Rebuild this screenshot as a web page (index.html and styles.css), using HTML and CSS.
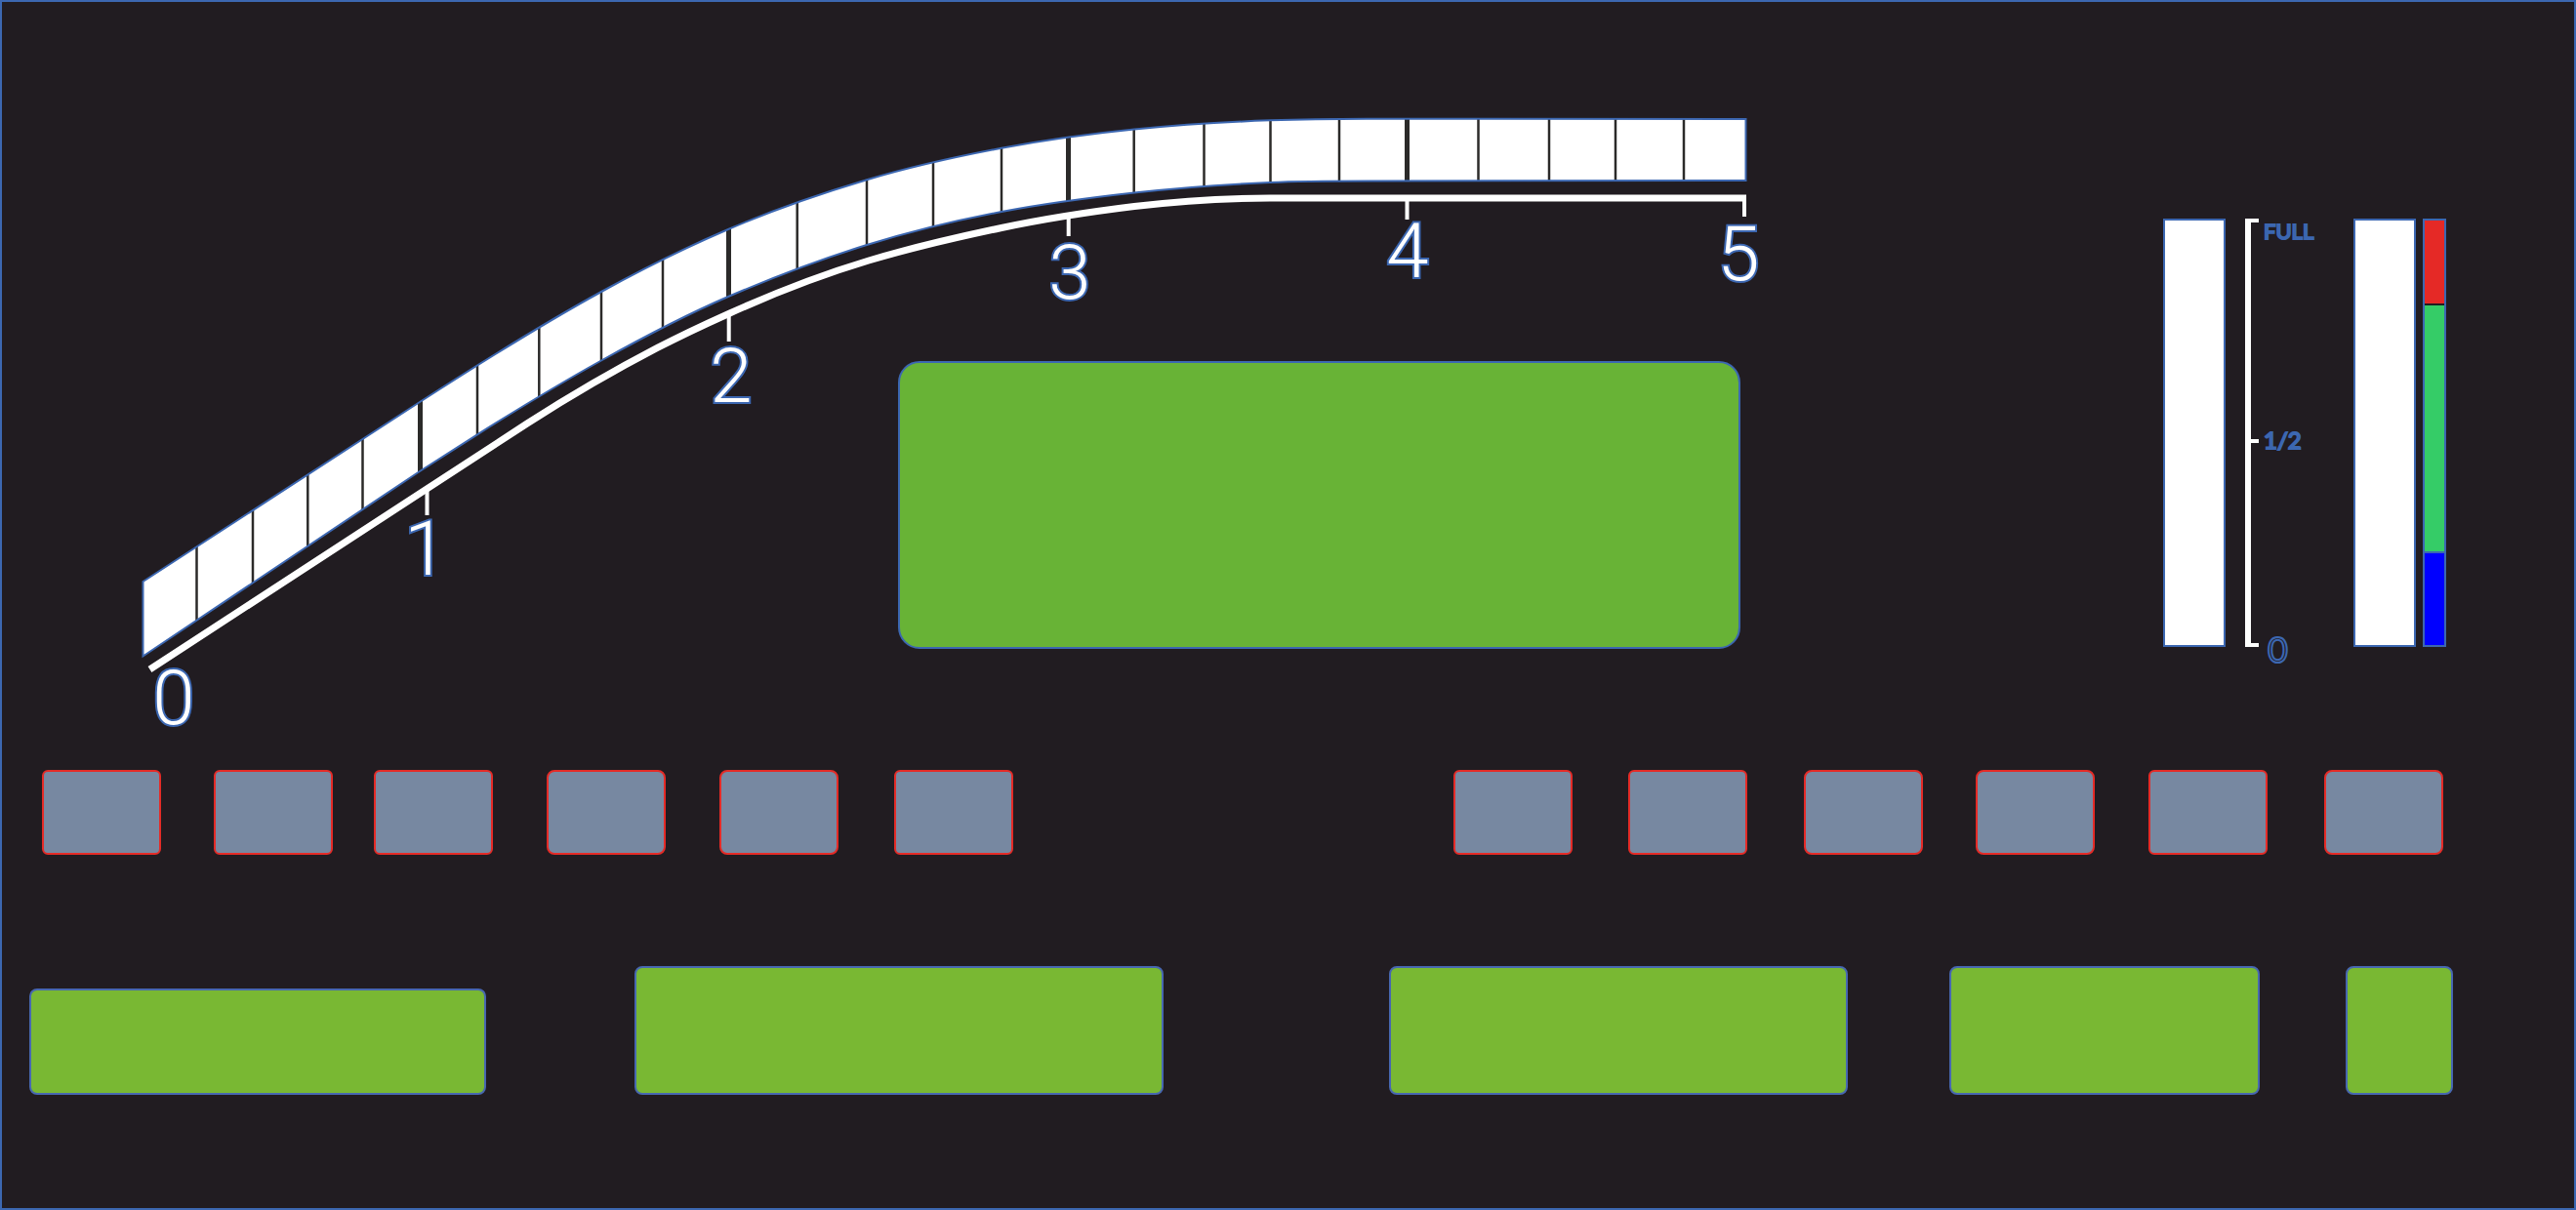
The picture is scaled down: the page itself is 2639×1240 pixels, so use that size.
FILE: index.html
```html
<!DOCTYPE html>
<html lang="en">
<head>
<meta charset="utf-8">
<title>Instrument cluster</title>
<link rel="stylesheet" href="styles.css">
</head>
<body>
<main class="panel">
  <section class="instruments">
    <div class="tacho">
      <svg class="dial" viewBox="2 2 1898 760" role="img" aria-label="Engine speed, 0 to 5">
        <defs>
          <path id="band" d="M146.500 596L430 412C492 372 554 333 616 299C659 275.300 703 253.500 746 235C793 214.800 841 198.400 888 184.300C934 170.500 980 160.500 1026 151.800C1071 143.300 1117 137 1162 132.500C1208 128 1255 125 1301 123.300C1334 122.100 1367 121.700 1400 121.700L1788.500 122V185L1400 185.500C1367 185.500 1334 185.500 1301 187C1255 189 1208 192.400 1162 197.500C1117 202.500 1071 208.400 1026 217C980 225.700 934 236.700 888 251C841 265.600 793 283.800 746 304C703 322.500 659 345.600 616 369.500C573.700 393 531.300 418.700 489 445.300L430 483L146.500 672.500Z"/>
          <clipPath id="bandClip"><use href="#band"/></clipPath>
        </defs>
        <use href="#band" class="band-fill"/>
        <g clip-path="url(#bandClip)">
          <path class="minor" d="M201.500 100V700M259 100V700M315.300 100V700M371.500 100V700M489 100V700M552.300 100V700M616 100V700M679 100V700M816.700 100V700M888 100V700M956 100V700M1026 100V700M1161.700 100V700M1233.500 100V700M1301.500 100V700M1372 100V700M1514.500 100V700M1587 100V700M1655 100V700M1725 100V700"/>
          <path class="major" d="M430.500 100V700M746.500 100V700M1094.500 100V700M1441.500 100V700"/>
        </g>
        <use href="#band" class="band-edge"/>
        <path class="scale-line" d="M153.500 686L540 434C584 405.800 629 379.600 673 356.700C697 344.200 722 332.500 746 321.700C794 300 842 281.400 890 267C935 253.500 981 243 1026 233.500C1071 224 1117 217 1162 211.500C1208 206 1255 203 1301 203H1789"/>
        <path class="scale-tick" d="M437.500 500V528M746.700 324V350M1094.700 222V242M1441.500 203V225M1787 203V222"/>
        <g class="digits">
          <text x="178" y="742">0</text>
          <text x="436" y="589">1</text>
          <text x="749" y="412">2</text>
          <text x="1096" y="306">3</text>
          <text x="1442" y="284">4</text>
          <text x="1781" y="287">5</text>
        </g>
      </svg>
      <div class="screen"></div>
    </div>
    <div class="meters">
      <div class="bar fuel"></div>
      <div class="bracket"><i></i><i class="half"></i><i></i></div>
      <div class="labels"><span>FULL</span><span class="fraction">1/2</span><span class="zero">0</span></div>
      <div class="bar temp"></div>
      <div class="zones"><i class="hot"></i><i class="normal"></i><i class="cold"></i></div>
    </div>
  </section>

  <section class="lamps">
    <button class="lamp" aria-label="Lamp 1"></button>
    <button class="lamp" aria-label="Lamp 2"></button>
    <button class="lamp" aria-label="Lamp 3"></button>
    <button class="lamp round" aria-label="Lamp 4"></button>
    <button class="lamp round" aria-label="Lamp 5"></button>
    <button class="lamp" aria-label="Lamp 6"></button>
    <button class="lamp" aria-label="Lamp 7"></button>
    <button class="lamp" aria-label="Lamp 8"></button>
    <button class="lamp round" aria-label="Lamp 9"></button>
    <button class="lamp round" aria-label="Lamp 10"></button>
    <button class="lamp" aria-label="Lamp 11"></button>
    <button class="lamp round" aria-label="Lamp 12"></button>
  </section>

  <section class="readouts">
    <div class="readout short"></div>
    <div class="readout"></div>
    <div class="readout"></div>
    <div class="readout"></div>
    <div class="readout"></div>
  </section>
</main>
</body>
</html>
```
FILE: styles.css
```css
* { box-sizing: border-box; }

:root {
  --blue: #3c67b1;
  --ground: #211c21;
}

body { margin: 0; background: var(--ground); }

.panel {
  min-height: 100vh;
  border: 2px solid var(--blue);
  background: var(--ground);
}

.instruments {
  display: grid;
  grid-template-columns: 1898fr 737fr;
}

/* dial and screen share one grid cell */
.tacho { display: grid; align-items: start; }
.tacho > * { grid-area: 1 / 1; }

.dial { display: block; width: 100%; }
.band-fill { fill: #fff; }
.band-edge { fill: none; stroke: var(--blue); stroke-width: 2; }
.minor { stroke: #2b2a29; stroke-width: 2.5; }
.major { stroke: #2b2a29; stroke-width: 5; }
.scale-line { fill: none; stroke: #fff; stroke-width: 7; }
.scale-tick { stroke: #fff; stroke-width: 4; }

.digits {
  font: 300 78px Roboto, "Liberation Sans", sans-serif;
  text-anchor: middle;
  fill: #fff;
  stroke: var(--blue);
  stroke-width: 4;
  paint-order: stroke;
}

.screen {
  width: 45.5%;
  aspect-ratio: 864 / 295;
  margin: 19.4% 0 0 48.35%;
  border: 2px solid var(--blue);
  border-radius: 22px;
  background: #68b336;
}

.meters {
  display: grid;
  grid-template-columns: 316fr 64fr 20fr 17fr 2fr 92fr 64fr 7fr 24fr 131fr;
  grid-template-rows: 439px;
  padding-top: 222px;
}

.bar { border: 2px solid var(--blue); background: #fff; }
.fuel { grid-column: 2; }
.temp { grid-column: 7; }

.bracket {
  grid-column: 4;
  display: flex;
  flex-direction: column;
  justify-content: space-between;
  border-left: 6px solid #fff;
}
.bracket i { width: 8px; height: 4px; background: #fff; }
.bracket .half { margin-top: 16px; }

.labels {
  grid-column: 6;
  height: 454px;
  display: flex;
  flex-direction: column;
  justify-content: space-between;
  font: 400 22px/26px Lato, "Liberation Sans", sans-serif;
  color: var(--ground);
  -webkit-text-stroke: 2px var(--blue);
}
.fraction { font-size: 24px; }
.zero { padding-left: 4px; font-size: 36px; }

.zones {
  grid-column: 9;
  display: grid;
  grid-template-rows: 88fr 254fr 97fr;
  border: 2px solid var(--blue);
}
.hot { background: #e52926; border-bottom: 2px solid var(--ground); }
.normal { background: #35cc67; }
.cold { background: #00f; border-top: 2px solid var(--blue); }

.lamps {
  display: grid;
  grid-template-columns:
    [l1] 122fr 54fr [l2] 122fr 42fr [l3] 122fr 55fr [l4] 122fr 55fr
    [l5] 122fr 57fr [l6] 122fr 451fr [l7] 122fr 57fr [l8] 122fr 58fr
    [l9] 122fr 54fr [l10] 122fr 55fr [l11] 122fr 58fr [l12] 122fr;
  padding: 27px 5.07% 0 1.57%;
}
.lamp {
  height: 87px;
  padding: 0;
  border: 2px solid #e42b27;
  border-radius: 6px;
  background: #7788a1;
}
.lamp.round { border-radius: 8px; }
.lamp:nth-child(1) { grid-column: l1; }
.lamp:nth-child(2) { grid-column: l2; }
.lamp:nth-child(3) { grid-column: l3; }
.lamp:nth-child(4) { grid-column: l4; }
.lamp:nth-child(5) { grid-column: l5; }
.lamp:nth-child(6) { grid-column: l6; }
.lamp:nth-child(7) { grid-column: l7; }
.lamp:nth-child(8) { grid-column: l8; }
.lamp:nth-child(9) { grid-column: l9; }
.lamp:nth-child(10) { grid-column: l10; }
.lamp:nth-child(11) { grid-column: l11; }
.lamp:nth-child(12) { grid-column: l12; }

.readouts {
  display: grid;
  grid-template-columns: 28fr 468fr 152fr 542fr 232fr 470fr 104fr 318fr 88fr 110fr 124fr;
  align-items: end;
  padding: 114px 0 48px;
}
.readout {
  height: 132px;
  border: 2px solid #4767b0;
  border-radius: 8px;
  background: #79b833;
}
.readout.short { height: 109px; }
.readout:nth-child(1) { grid-column: 2; }
.readout:nth-child(2) { grid-column: 4; }
.readout:nth-child(3) { grid-column: 6; }
.readout:nth-child(4) { grid-column: 8; }
.readout:nth-child(5) { grid-column: 10; }
```
